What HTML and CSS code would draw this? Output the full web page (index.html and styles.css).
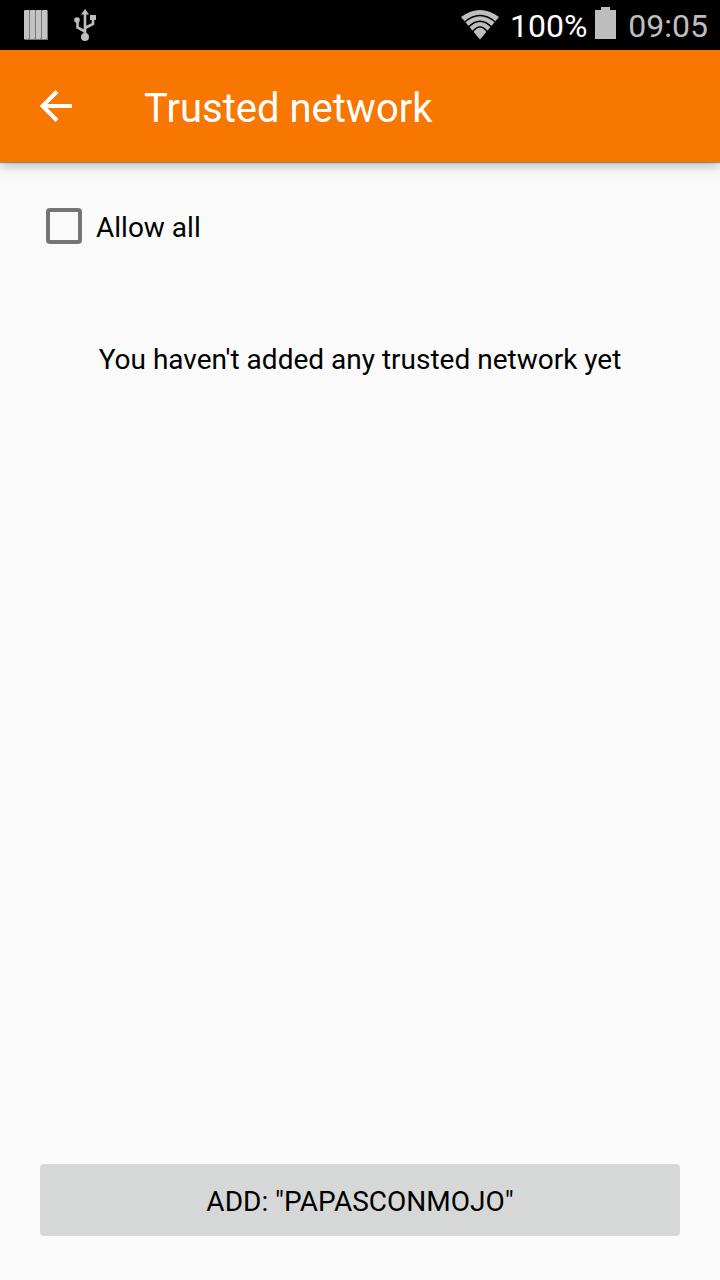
FILE: index.html
```html
<!DOCTYPE html>
<html lang="en">
<head>
<meta charset="utf-8">
<meta name="viewport" content="width=device-width, initial-scale=1">
<title>Trusted network</title>
<link rel="stylesheet" href="styles.css">
</head>
<body class="screen">
  <div class="status-bar">
    <div class="status-notifications">
      <svg width="24" height="30" viewBox="0 0 24 30" aria-hidden="true">
        <path d="M1 0h22l1 1v29H1l-1-1V1z" fill="#777"/>
        <path d="M1 0h4v28l-1 1H0V1zM7 0h4v28l-1 1H6V1zM13 0h4v28l-1 1h-4V1zM19 0h4v28l-1 1h-4V1z" fill="#c4c4c4"/>
      </svg>
      <svg width="22" height="32" viewBox="0 0 22 32" aria-hidden="true">
        <path d="M11 4v23M11 22.500l-7.500-4V12M11 19l8-4V9" fill="none" stroke="#bebebe" stroke-width="2.600"/>
        <path d="M11 0l4 5.500H7zM16 6h6v5h-6z" fill="#bebebe"/>
        <circle cx="3" cy="11" r="2.800" fill="#bebebe"/>
        <circle cx="11" cy="28" r="4" fill="#bebebe"/>
      </svg>
    </div>
    <div class="status-system">
      <svg width="40" height="30" viewBox="0 0 40 30" aria-hidden="true">
        <path d="M1 7Q20-7 39 7L20 29.500z" fill="#bebebe"/>
        <path d="M4 12.500Q20-1.500 36 12.500M8 17.500Q20 5 32 17.500M12 22.500Q20 11.500 28 22.500" fill="none" stroke="#000" stroke-width="1.500"/>
      </svg>
      <span class="battery-level">100%</span>
      <svg class="battery" width="21" height="32" viewBox="0 0 21 32" aria-hidden="true">
        <path d="M6 0h9v3h6v29H0V3h6z" fill="#bebebe"/>
      </svg>
      <time class="clock">09:05</time>
    </div>
  </div>

  <header class="app-bar">
    <button class="back" type="button" aria-label="Navigate up">
      <svg width="32" height="32" viewBox="0 0 32 32" aria-hidden="true">
        <path d="M32 16H3M17 1.500L2.500 16 17 30.500" fill="none" stroke="#fff" stroke-width="4"/>
      </svg>
    </button>
    <h1 class="title">Trusted network</h1>
  </header>

  <main class="content">
    <label class="allow-all">
      <input class="checkbox" type="checkbox">
      <span class="allow-all-text">Allow all</span>
    </label>
    <p class="empty">You haven't added any trusted network yet</p>
    <button class="add" type="button">ADD: "PAPASCONMOJO"</button>
  </main>
</body>
</html>
```
FILE: styles.css
```css
* {
  box-sizing: border-box;
}

.screen {
  display: flex;
  flex-direction: column;
  min-height: 100vh;
  margin: 0;
  background: #fafafa;
  color: #000;
  font-family: Roboto, "Noto Sans", sans-serif;
  font-size: 28px;
  line-height: 36px;
}

.status-bar {
  display: flex;
  align-items: center;
  justify-content: space-between;
  height: 50px;
  padding: 0 12px 0 24px;
  background: #000;
  color: #bebebe;
  font-size: 32px;
}

.status-bar svg {
  display: block;
}

.status-notifications {
  display: flex;
  align-items: center;
  gap: 26px;
}

.status-system {
  display: flex;
  align-items: center;
}

.battery-level {
  margin: 2px 8px 0 10px;
  color: #fff;
}

.battery {
  margin: 0 12px 4px 0;
}

.clock {
  margin-top: 2px;
}

.app-bar {
  display: flex;
  align-items: center;
  height: 112px;
  background: #f77700;
  color: #fff;
  box-shadow: 0 1px 1px rgba(0, 0, 0, 0.35), 0 4px 12px rgba(0, 0, 0, 0.25);
}

.back {
  display: flex;
  align-items: center;
  justify-content: center;
  width: 112px;
  height: 112px;
  padding: 0;
  border: 0;
  background: none;
}

.title {
  margin: 6px 0 0 32px;
  font-size: 40px;
  font-weight: 400;
  line-height: 48px;
}

.content {
  display: flex;
  flex: 1;
  flex-direction: column;
  padding: 46px 40px 44px;
}

.allow-all {
  display: flex;
  align-items: center;
  align-self: flex-start;
  gap: 14px;
  height: 36px;
  padding-left: 6px;
}

.allow-all-text {
  padding-top: 4px;
}

.checkbox {
  width: 36px;
  height: 36px;
  margin: 0;
  border: 4px solid #757575;
  border-radius: 4px;
  appearance: none;
}

.checkbox:checked {
  background: #f77700;
}

.empty {
  margin: 98px 0 auto;
  text-align: center;
}

.add {
  width: 100%;
  height: 72px;
  padding: 4px 0 0;
  border: 0;
  border-radius: 4px;
  background: #d6d7d7;
  color: #000;
  font: inherit;
}
```
